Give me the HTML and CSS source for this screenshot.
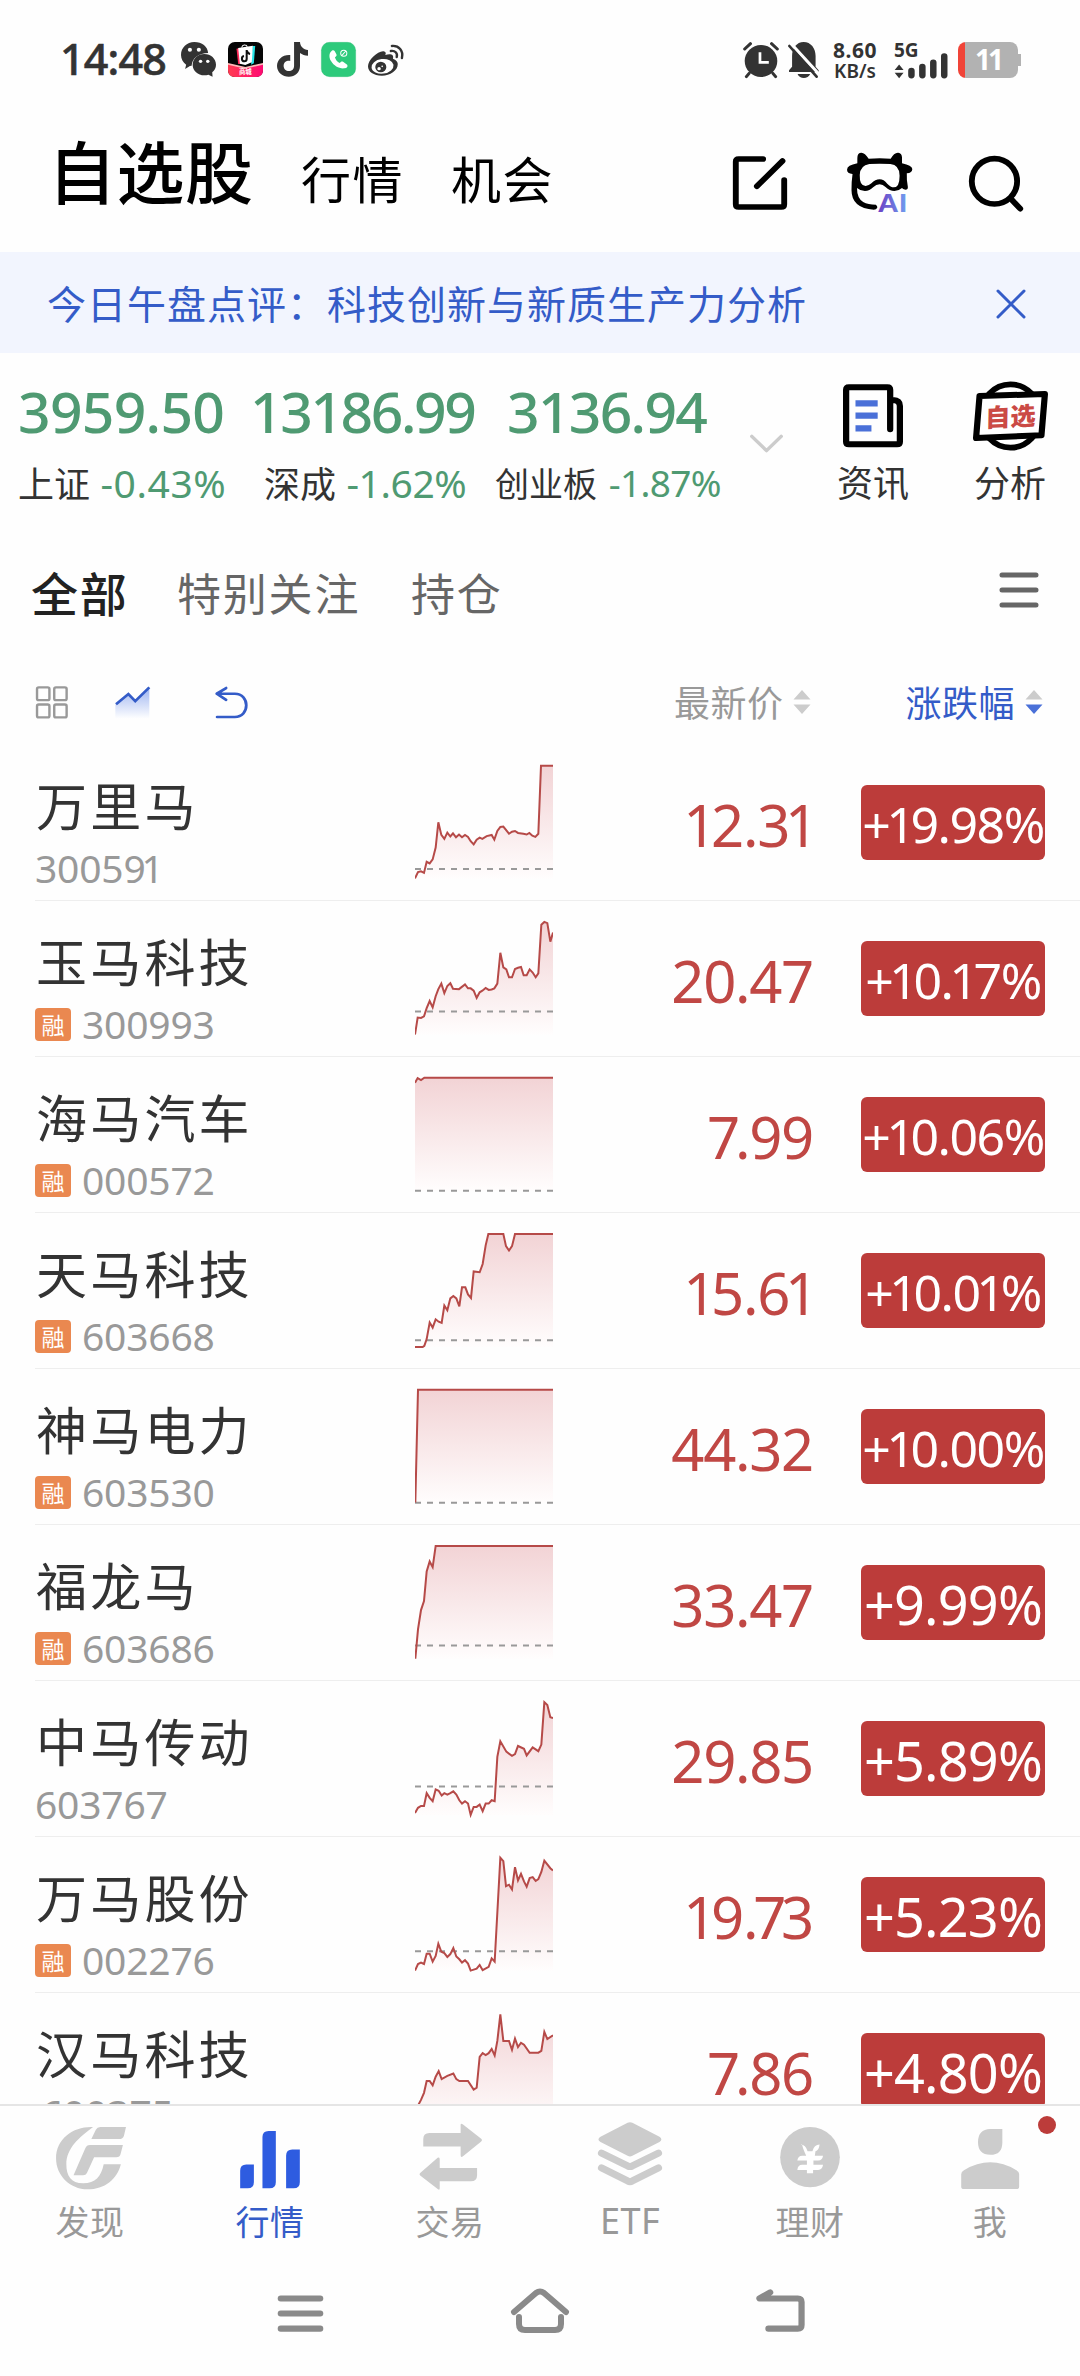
FILE: index.html
```html
<!DOCTYPE html>
<html lang="zh-CN">
<head>
<meta charset="utf-8">
<title>自选股</title>
<link rel="stylesheet" href="styles.css">
</head>
<body>
<svg class="defs" width="0" height="0">
  <defs>
    <linearGradient id="area" x1="0" y1="0" x2="0" y2="1"><stop offset="0" stop-color="#f2d3d5"/><stop offset="1" stop-color="#fffdfd"/></linearGradient>
    <linearGradient id="blue" x1="0" y1="0" x2="0" y2="1"><stop offset="0" stop-color="#9db4f0"/><stop offset="1" stop-color="#ffffff"/></linearGradient>
    <linearGradient id="ai" x1="0" y1="0" x2="1" y2="0"><stop offset="0" stop-color="#6c3fc4"/><stop offset="1" stop-color="#6f9ff0"/></linearGradient>
    <linearGradient id="shop" x1="0" y1="0" x2="1" y2="0"><stop offset="0" stop-color="#ff3b52"/><stop offset="1" stop-color="#ff0a72"/></linearGradient>
  </defs>
</svg>
<div class="screen">
  <div class="status">
    <span class="time">14:48</span>
    <svg class="i-wechat" viewBox="526 126 102 105" preserveAspectRatio="none">
      <path d="M565 126c22 0 39 14 40 33-26 0-47 15-48 38l-5 1-14 9 3-13c-9-7-15-17-15-29 0-22 17-39 39-39z" fill="#333"/>
      <path d="M594 162c19 0 34 14 34 32 0 9-4 17-11 23l1 13-12-6c-4 1-8 2-12 2-19 0-34-14-34-32s15-32 34-32z" fill="#333"/>
      <g fill="#fff"><circle cx="552" cy="149" r="6"/><circle cx="578" cy="149" r="6"/><circle cx="583" cy="184" r="5"/><circle cx="604" cy="184" r="5"/></g>
    </svg>
    <svg class="i-shop" viewBox="661 126 103 105" preserveAspectRatio="none">
      <rect x="661" y="126" width="103" height="105" rx="20" fill="#050505"/>
      <path d="M661 191l51 12 52-12v20q0 20-20 20h-63q-20 0-20-20z" fill="url(#shop)"/>
      <path d="M661 189l51 12 52-12v5l-52 12-51-12z" fill="#ffb8b8"/>
      <path d="M686 146l5 46h10l-4-48z" fill="#ff2a5a"/><path d="M733 138h8l-4 52-8 4z" fill="#25e5e8"/>
      <path d="M691 144l43-7-3 50-19 8-16-4z" fill="#fff"/>
      <path d="M701 143q3-10 10-8 7 1 6 7" fill="none" stroke="#fff" stroke-width="3"/>
      <path d="M716 150v26a7 8 0 1 1-8-8M716 152q3 9 10 10" fill="none" stroke="#111" stroke-width="6"/>
      <text x="712" y="223" class="shop-text" text-anchor="middle">商城</text>
    </svg>
    <svg class="i-tiktok" viewBox="804 126 89 105" preserveAspectRatio="none">
      <path d="M853 126h17c1 14 10 23 23 24v17c-9 0-17-3-23-8v39c0 19-14 32-32 32s-34-13-34-32c0-20 17-35 38-33v18c-10-2-19 4-19 15 0 9 7 15 15 15 9 0 15-6 15-16z" fill="#333"/>
    </svg>
    <svg class="i-phone" viewBox="931 126 103 105" preserveAspectRatio="none">
      <rect x="932" y="127" width="101" height="103" rx="24" fill="#2dca7b" stroke="#23b86c"/>
      <path d="M963 152c-9 7-9 20-2 32 8 14 24 23 39 21 8-1 11-6 8-11l-12-9c-4-2-7 0-10 4-7-3-12-9-14-17 5-3 6-6 4-10l-5-9c-2-3-5-3-8-1z" fill="#fff"/>
      <circle cx="998" cy="160" r="9" fill="none" stroke="#fff" stroke-width="3"/><path d="M992 167l12-14" stroke="#fff" stroke-width="3"/>
    </svg>
    <svg class="i-weibo" viewBox="1068 132 104 99" preserveAspectRatio="none">
      <path d="M1068 199c0-19 29-47 45-45 6 1 8 5 5 11 14-5 26-2 22 11 9 3 14 9 14 16 0 20-22 35-46 35s-40-11-40-28z" fill="#333"/>
      <ellipse cx="1110" cy="199" rx="32" ry="22" fill="#fff" transform="rotate(-8 1110 199)"/>
      <circle cx="1105" cy="201" r="16" fill="#333"/><circle cx="1100" cy="206" r="5" fill="#fff"/><circle cx="1109" cy="199" r="2.500" fill="#fff"/>
      <path d="M1134 153c12-2 20 6 17 18M1137 138c20-2 34 14 29 36" fill="none" stroke="#333" stroke-width="7" stroke-linecap="round"/>
    </svg>
    <span class="push"></span>
    <svg class="i-alarm" viewBox="582 126 106 108" preserveAspectRatio="none">
      <circle cx="635" cy="183" r="48" fill="#333"/>
      <path d="M587 147l17-16M683 147l-17-16M600 220l-8 10M670 220l8 10" stroke="#333" stroke-width="9" stroke-linecap="round"/>
      <path d="M632 157v30h26" fill="none" stroke="#fff" stroke-width="8"/>
    </svg>
    <svg class="i-bell" viewBox="714 126 91 108" preserveAspectRatio="none">
      <path d="M717 216v-5l9-11v-32c0-23 13-42 34-42s35 19 35 42v32l9 11v5zM742 222h37c-6 16-31 16-37 0z" fill="#333"/>
      <path d="M722 130l82 91" stroke="#fff" stroke-width="9"/><path d="M718 138l80 92" stroke="#333" stroke-width="8" stroke-linecap="round"/>
    </svg>
    <span class="speed"><b>8.60</b><b>KB/s</b></span>
    <span class="signal"><b>5G</b>
      <svg viewBox="1024 158 158 76" preserveAspectRatio="none"><path d="M1039 193l13 17h-26zM1039 235l13-17h-26z" fill="#333"/><path d="M1075 212v14M1107 200v26M1139 187v39M1171 168v58" stroke="#333" stroke-width="19" stroke-linecap="round"/></svg>
    </span>
    <span class="battery"><span class="level">11</span></span>
  </div>

  <div class="header">
    <span class="h-main">自选股</span><span class="h-tab h-tab1">行情</span><span class="h-tab">机会</span>
    <span class="push"></span>
    <svg class="i-edit" viewBox="555 450 162 195" preserveAspectRatio="none"><g fill="none" stroke="#000" stroke-width="17" stroke-linecap="round" stroke-linejoin="round"><path d="M645 477h-71q-8 0-8 8v128q0 8 8 8h124q8 0 8-8v-73"/><path d="M627 559l74-76"/></g></svg>
    <svg class="i-owl" viewBox="887 450 195 195" preserveAspectRatio="none">
      <path d="M920 474q0-16 12-16 10 0 21 18 32-3 64 0 10-19 22-18 11 1 11 15v17q29 7 30 17 0 12-16 13-1 20 3 40 1 9-7 9-8-1-10-5-10 9-22 9-14 0-26-12-8-8-17-8-10 0-19 9-10 11-24 11-13 0-23-9 0 31 18 42 14 8 37 8 5 4 4 9-3 6-10 6-65-4-65-59 0-27 3-48-16-2-16-13 0-13 30-19z" fill="#000"/>
      <path d="M955 492q30-2 61 0 27 3 27 35 0 35-17 35-9 0-19-11-10-13-22-13-13 0-24 12-9 8-17 8-18 0-17-33 1-29 28-33z" fill="#fff"/>
      <text x="979" y="637" class="ai-text" textLength="86" lengthAdjust="spacingAndGlyphs" fill="url(#ai)">AI</text>
    </svg>
    <svg class="i-search" viewBox="1240 450 163 195" preserveAspectRatio="none"><g fill="none" stroke="#000" stroke-width="17" stroke-linecap="round"><ellipse cx="1317" cy="544" rx="66" ry="68"/><path d="M1368 600l24 26"/></g></svg>
  </div>

  <div class="banner">
    <span>今日午盘点评：科技创新与新质生产力分析</span>
    <svg viewBox="0 0 30 30"><path d="M2 2l26 26M28 2L2 28" stroke="#345cc8" stroke-width="3" stroke-linecap="round"/></svg>
  </div>

  <div class="indices">
    <div class="index ix1"><div class="ix-num">3959.50</div><div class="ix-sub">上证 <em>-0.43%</em></div></div>
    <div class="index ix2"><div class="ix-num">13186.99</div><div class="ix-sub">深成 <em>-1.62%</em></div></div>
    <div class="index ix3"><div class="ix-num">3136.94</div><div class="ix-sub">创业板 <em>-1.87%</em></div></div>
    <svg class="i-chev" viewBox="608 550 100 62" preserveAspectRatio="none"><path d="M616 560l42 42 42-42" fill="none" stroke="#ccc" stroke-width="10" stroke-linecap="round" stroke-linejoin="round"/></svg>
    <div class="tool t1">
      <svg class="i-news" viewBox="884 395 173 210" preserveAspectRatio="none"><path d="M1020 540V422q0-8-8-8H901q-8 0-8 8v155q0 8 8 8h139q8 0 8-8V470q0-17-20-18" fill="none" stroke="#000" stroke-width="18" stroke-linecap="round" stroke-linejoin="round"/><path d="M920 462h64M920 499h64M920 537h46" stroke="#4a70d8" stroke-width="19"/></svg>
      <span>资讯</span>
    </div>
    <div class="tool t2">
      <svg class="i-stamp" viewBox="1257 395 218 210" preserveAspectRatio="none"><ellipse cx="1366" cy="500" rx="87" ry="95" fill="#fff" stroke="#000" stroke-width="17"/><path d="M1276 440l190-6-10 124-190 8z" fill="#fff" stroke="#000" stroke-width="18" stroke-linejoin="round"/><text class="stamp-text" transform="translate(1292 533) rotate(-3) skewX(-4)" textLength="147" lengthAdjust="spacingAndGlyphs">自选</text></svg>
      <span>分析</span>
    </div>
  </div>

  <div class="groups">
    <span class="g-on">全部</span><span class="g2">特别关注</span><span>持仓</span>
    <span class="push"></span>
    <svg viewBox="0 0 40 36"><path d="M3 3h34M3 18h34M3 33h34" stroke="#666" stroke-width="5" stroke-linecap="round"/></svg>
  </div>

  <div class="cols">
    <svg class="i-grid" viewBox="104 467 93 98" preserveAspectRatio="none"><g fill="none" stroke="#999" stroke-width="7"><rect x="107" y="471" width="36" height="38" rx="5"/><rect x="157" y="471" width="36" height="38" rx="5"/><rect x="107" y="522" width="36" height="38" rx="5"/><rect x="157" y="522" width="36" height="38" rx="5"/></g></svg>
    <svg class="i-trend" viewBox="333 467 102 98" preserveAspectRatio="none"><path d="M334 522l38-30 20 20 41-41v94h-99z" fill="url(#blue)"/><path d="M336 521l36-30 20 21 41-41" fill="none" stroke="#345cc8" stroke-width="8"/></svg>
    <svg class="i-undo" viewBox="624 467 95 98" preserveAspectRatio="none"><path d="M656 473l-27 17 27 18M631 490h50c44 0 44 69 0 69h-51" fill="none" stroke="#345cc8" stroke-width="8" stroke-linecap="round" stroke-linejoin="round"/></svg>
    <span class="push"></span>
    <span class="c-label">最新价</span>
    <svg class="i-sort s1" viewBox="0 0 18 24"><path d="M9 0l8.500 9.500H.5zM9 24l8.500-9.500H.5z" fill="#ccc"/></svg>
    <span class="c-label on">涨跌幅</span>
    <svg class="i-sort" viewBox="0 0 18 24"><path d="M9 0l8.500 9.500H.5z" fill="#ccc"/><path d="M9 24l8.500-9.500H.5z" fill="#4a70d8"/></svg>
  </div>

  <div class="list">
    <div class="row">
      <div class="stock"><div class="name">万里马</div><div class="code">30059<i>1</i></div></div>
      <svg class="spark" viewBox="75 12.600 414 392" preserveAspectRatio="none">
        <path class="area" d="M75 350L84 334 93 332 102 336 110 308 119 312 128 302 137 272 145 208 154 240 163 250 172 234 181 244 189 236 198 246 207 239 216 246 225 240 234 245 242 256 251 264 260 252 269 247 277 250 290 243 305 240 313 252 322 230 331 220 340 219 357 237 366 232 375 230 384 235 400 237 410 239 418 235 427 242 436 245 445 237 453 65 489 65V350z"/>
        <path class="base" d="M75 326H489"/>
        <path class="line" d="M75 350L84 334 93 332 102 336 110 308 119 312 128 302 137 272 145 208 154 240 163 250 172 234 181 244 189 236 198 246 207 239 216 246 225 240 234 245 242 256 251 264 260 252 269 247 277 250 290 243 305 240 313 252 322 230 331 220 340 219 357 237 366 232 375 230 384 235 400 237 410 239 418 235 427 242 436 245 445 237 453 65 489 65"/>
      </svg>
      <div class="price"><i>1</i>2.3<i>1</i></div><div class="pill">+<i>1</i>9.98%</div>
    </div>
    <div class="row">
      <div class="stock"><div class="name">玉马科技</div><div class="code"><span class="tag">融</span>300993</div></div>
      <svg class="spark" viewBox="75 407.100 414 392" preserveAspectRatio="none">
        <path class="area" d="M75 745L83 702 93 703 102 699 110 678 119 660 128 676 137 648 145 630 154 616 163 640 172 622 181 615 189 629 207 630 225 618 234 628 242 628 251 634 260 652 269 638 277 634 287 627 296 632 305 631 313 628 322 616 331 538 340 575 349 580 357 600 366 600 375 579 384 576 393 574 401 595 410 595 419 580 428 588 437 600 445 590 454 467 463 460 472 463 481 510 489 487V745z"/>
        <path class="base" d="M75 686.500H489"/>
        <path class="line" d="M75 745L83 702 93 703 102 699 110 678 119 660 128 676 137 648 145 630 154 616 163 640 172 622 181 615 189 629 207 630 225 618 234 628 242 628 251 634 260 652 269 638 277 634 287 627 296 632 305 631 313 628 322 616 331 538 340 575 349 580 357 600 366 600 375 579 384 576 393 574 401 595 410 595 419 580 428 588 437 600 445 590 454 467 463 460 472 463 481 510 489 487"/>
      </svg>
      <div class="price">20.47</div><div class="pill">+<i>1</i>0.<i>1</i>7%</div>
    </div>
    <div class="row">
      <div class="stock"><div class="name">海马汽车</div><div class="code"><span class="tag">融</span>000572</div></div>
      <svg class="spark" viewBox="75 801.600 414 392" preserveAspectRatio="none">
        <path class="area" d="M75 867L83 855 93 860 103 854H489V1140H75z"/>
        <path class="base" d="M75 1140H489"/>
        <path class="line" d="M75 867L83 855 93 860 103 854H489"/>
      </svg>
      <div class="price"><i>7</i>.99</div><div class="pill">+<i>1</i>0.06%</div>
    </div>
    <div class="row">
      <div class="stock"><div class="name">天马科技</div><div class="code"><span class="tag">融</span>603668</div></div>
      <svg class="spark" viewBox="75 1196.100 414 392" preserveAspectRatio="none">
        <path class="area" d="M75 1535H98L103 1532 110 1515 119 1473 128 1486 137 1465 146 1471 155 1474 163 1430 172 1442 181 1412 190 1406 199 1412 208 1432 216 1384 226 1384 234 1402 243 1411 251 1344 269 1346 278 1325 287 1278 295 1249H340L348 1280 357 1291 366 1280 375 1249H489V1535z"/>
        <path class="base" d="M75 1518H489"/>
        <path class="line" d="M75 1535H98L103 1532 110 1515 119 1473 128 1486 137 1465 146 1471 155 1474 163 1430 172 1442 181 1412 190 1406 199 1412 208 1432 216 1384 226 1384 234 1402 243 1411 251 1344 269 1346 278 1325 287 1278 295 1249H340L348 1280 357 1291 366 1280 375 1249H489"/>
      </svg>
      <div class="price"><i>1</i>5.6<i>1</i></div><div class="pill">+<i>1</i>0.0<i>1</i>%</div>
    </div>
    <div class="row">
      <div class="stock"><div class="name">神马电力</div><div class="code"><span class="tag">融</span>603530</div></div>
      <svg class="spark" viewBox="75 19.100 414 328.400" preserveAspectRatio="none">
        <path class="area" d="M76 302L84 63H489V302z"/>
        <path class="base" d="M75 302.500H489"/>
        <path class="line" d="M76 302L84 63H489"/>
      </svg>
      <div class="price">44.32</div><div class="pill">+<i>1</i>0.00%</div>
    </div>
    <div class="row">
      <div class="stock"><div class="name">福龙马</div><div class="code"><span class="tag">融</span>603686</div></div>
      <svg class="spark" viewBox="75 349.700 414 328.400" preserveAspectRatio="none">
        <path class="area" d="M76 633L84 571 93 530 102 511 110 448 119 427 128 439 137 394H489V633z"/>
        <path class="base" d="M75 605H489"/>
        <path class="line" d="M76 633L84 571 93 530 102 511 110 448 119 427 128 439 137 394H489"/>
      </svg>
      <div class="price">33.47</div><div class="pill big">+9.99%</div>
    </div>
    <div class="row">
      <div class="stock"><div class="name">中马传动</div><div class="code">603767</div></div>
      <svg class="spark" viewBox="75 680.300 414 328.400" preserveAspectRatio="none">
        <path class="area" d="M75 960L84 949 93 945 102 945 110 918 119 928 128 935 137 910 146 913 155 923 163 918 172 921 181 918 190 914 199 921 208 933 216 940 225 935 234 940 242 964 251 947 260 947 269 942 278 956 287 940 296 940 305 933 314 935 322 841 331 808 349 830 366 839 375 835 384 818 402 824 410 838 428 821 445 829 454 815 463 725 472 731 481 757 489 759V964H75z"/>
        <path class="base" d="M75 904H489"/>
        <path class="line" d="M75 960L84 949 93 945 102 945 110 918 119 928 128 935 137 910 146 913 155 923 163 918 172 921 181 918 190 914 199 921 208 933 216 940 225 935 234 940 242 964 251 947 260 947 269 942 278 956 287 940 296 940 305 933 314 935 322 841 331 808 349 830 366 839 375 835 384 818 402 824 410 838 428 821 445 829 454 815 463 725 472 731 481 757 489 759"/>
      </svg>
      <div class="price">29.85</div><div class="pill big">+5.89%</div>
    </div>
    <div class="row">
      <div class="stock"><div class="name">万马股份</div><div class="code"><span class="tag">融</span>002276</div></div>
      <svg class="spark" viewBox="75 1010.900 414 328.400" preserveAspectRatio="none">
        <path class="area" d="M75 1294L84 1280 93 1277 102 1280 110 1258 119 1258 128 1275 137 1263 145 1237 154 1254 163 1257 172 1265 181 1259 190 1246 199 1264 208 1270 216 1277 225 1272 234 1279 242 1294 260 1290 269 1282 278 1293 296 1286 305 1268 314 1275 331 1055 340 1062 348 1115 357 1112 366 1122 375 1075 384 1103 393 1089 402 1105 410 1116 419 1098 428 1096 437 1104 445 1100 454 1085 463 1061 481 1077 489 1082V1294z"/>
        <path class="base" d="M75 1253H489"/>
        <path class="line" d="M75 1294L84 1280 93 1277 102 1280 110 1258 119 1258 128 1275 137 1263 145 1237 154 1254 163 1257 172 1265 181 1259 190 1246 199 1264 208 1270 216 1277 225 1272 234 1279 242 1294 260 1290 269 1282 278 1293 296 1286 305 1268 314 1275 331 1055 340 1062 348 1115 357 1112 366 1122 375 1075 384 1103 393 1089 402 1105 410 1116 419 1098 428 1096 437 1104 445 1100 454 1085 463 1061 481 1077 489 1082"/>
      </svg>
      <div class="price"><i>1</i>9.<i>7</i>3</div><div class="pill big">+5.23%</div>
    </div>
    <div class="row">
      <div class="stock"><div class="name">汉马科技</div><div class="code last">600375</div></div>
      <svg class="spark" viewBox="75 1341.500 414 328.400" preserveAspectRatio="none">
        <path class="area" d="M84 1580L93 1568 102 1553 110 1528 119 1528 128 1537 137 1519 146 1507 155 1524 172 1517 190 1512 199 1524 208 1528 234 1528 251 1546 260 1542 269 1477 278 1469 287 1473 296 1469 305 1460 314 1474 322 1443 331 1387 340 1443 357 1443 366 1462 375 1438 384 1456 393 1447 402 1451 419 1468 445 1468 454 1464 463 1424 472 1439 489 1431V1625H84z"/>
        <path class="line" d="M84 1580L93 1568 102 1553 110 1528 119 1528 128 1537 137 1519 146 1507 155 1524 172 1517 190 1512 199 1524 208 1528 234 1528 251 1546 260 1542 269 1477 278 1469 287 1473 296 1469 305 1460 314 1474 322 1443 331 1387 340 1443 357 1443 366 1462 375 1438 384 1456 393 1447 402 1451 419 1468 445 1468 454 1464 463 1424 472 1439 489 1431"/>
      </svg>
      <div class="price"><i>7</i>.86</div><div class="pill big">+4.80%</div>
    </div>
  </div>

  <div class="tabbar">
    <div class="tab"><svg viewBox="156 120 210 215" preserveAspectRatio="none"><g fill="#ccc"><path d="M270 141c-55-3-108 33-108 94 0 50 40 92 92 92 50 0 86-30 97-75h-50c-8 37-24 57-60 57-36 0-49-24-49-57 0-47 37-80 78-111z"/><path d="M366 141l-6 26q-3 10-14 10h-81l13-28q4-8 13-8zM357 195l-7 27q-2 9-12 9h-65l-21 47q-3 7-11 7h-28l34-80q4-10 14-10z"/></g></svg><span>发现</span></div>
    <div class="tab on"><svg viewBox="679 120 210 215" preserveAspectRatio="none"><path d="M697 324v-53q0-18 18-18h22v53q0 18-18 18zM762 324V171q0-18 18-18h21v153q0 18-18 18zM831 324v-98q0-18 18-18h22v98q0 18-18 18z" fill="#2e5ce0"/></svg><span>行情</span></div>
    <div class="tab"><svg viewBox="1201 120 210 215" preserveAspectRatio="none"><path d="M1228 199v-22q0-18 18-18h91v-24q0-6 6-2l54 43q5 4 0 8l-54 45q-6 4-6-4v-26zM1385 263v22q0 18-18 18h-91v21q0 7-5 3l-52-41q-4-4 0-8l51-45q6-4 6 4v26z" fill="#ccc"/></svg><span>交易</span></div>
    <div class="tab etf"><svg viewBox="156 120 210 215" preserveAspectRatio="none"><path d="M254 128q7-3 14 0l79 42q11 8 0 16l-79 41q-7 4-14 0l-79-41q-12-8 0-16z" fill="#ccc"/><path d="M178 219l76 38q7 4 14 0l76-38M178 263l76 39q7 4 14 0l76-39" fill="none" stroke="#ccc" stroke-width="21" stroke-linecap="round"/></svg><span>ETF</span></div>
    <div class="tab"><svg viewBox="679 120 210 215" preserveAspectRatio="none"><ellipse cx="784" cy="231" rx="87" ry="90" fill="#ccc"/><path d="M757 193q14 0 20 20h14q5-20 21-20-2 18-12 20l-2 14h24q-2 14-14 14h-14v13h28q-2 15-14 15h-15v10h-18v-10h-28q2-15 14-15h14v-13h-28q2-14 14-14h12q-10-22-12-34z" fill="#fff"/></svg><span>理财</span></div>
    <div class="tab"><svg viewBox="1201 120 210 215" preserveAspectRatio="none"><path d="M1342 147v40q0 37-35 37-36 0-36-38t36-39zM1222 282q0-7 8-12 77-47 153 0 8 5 8 11v38q0 7-8 7h-153q-8 0-8-7z" fill="#ccc"/></svg><span>我</span><b class="dot"></b></div>
  </div>
  <div class="sysnav">
    <svg viewBox="803 620 136 140" preserveAspectRatio="none"><path d="M814 654h114M814 699h114M814 744h114" stroke="#8a8a8a" stroke-width="18" stroke-linecap="round"/></svg>
    <svg class="home" viewBox="0 0 60 47"><path d="M4 26L26 7q4-3 8 0l22 19M9 31v7q0 6 6 6h30q6 0 6-6v-7" fill="none" stroke="#8a8a8a" stroke-width="6" stroke-linecap="round" stroke-linejoin="round"/></svg>
    <svg class="back" viewBox="626 620 142 140" preserveAspectRatio="none"><path d="M667 636l-31 18h111q11 0 11 11v68q0 11-11 11h-85" fill="none" stroke="#8a8a8a" stroke-width="18" stroke-linecap="round" stroke-linejoin="round"/></svg>
  </div>
</div>
</body>
</html>
```
FILE: styles.css
```css
* { box-sizing: border-box; }
body { margin: 0; background: #fefefe; font-family: "Noto Sans", "Noto Sans CJK SC", sans-serif; color: #333; }
svg { display: block; flex: none; overflow: visible; }
em, i { font-style: normal; }
span { white-space: nowrap; }
.defs { position: absolute; }
.screen { width: 1080px; height: 2376px; overflow: hidden; display: flex; flex-direction: column; }
.screen > div { flex: none; }
.push { flex: 1; }

/* system status bar */
.status { height: 120px; padding: 42px 59px 0 60px; display: flex; align-items: flex-start; }
.time { width: 121px; font-size: 43px; line-height: 34px; font-weight: 500; letter-spacing: -.8px; -webkit-text-stroke: .6px #333; }
.i-wechat { width: 35px; height: 35px; margin-right: 12px; }
.i-shop { width: 35px; height: 35px; margin-right: 14px; }
.shop-text { font: 700 19px "Noto Sans CJK SC", sans-serif; fill: #fff; }
.i-tiktok { width: 31px; height: 35px; margin-right: 13px; }
.i-phone { width: 35px; height: 35px; margin-right: 12px; }
.i-weibo { width: 36px; height: 33px; margin-top: 2px; }
.i-alarm { width: 36px; height: 36px; margin-right: 9px; }
.i-bell { width: 31px; height: 36px; margin-right: 12px; }
.speed { width: 48px; margin-right: 15px; text-align: center; font-size: 21px; line-height: 17px; letter-spacing: .5px; }
.speed b { display: block; font-weight: 700; }
.speed b:last-child { font-size: 19px; line-height: 24px; letter-spacing: 0; font-weight: 600; }
.signal { width: 54px; margin-right: 10px; font-size: 19px; line-height: 16px; height: 36px; }
.signal b { display: block; height: 11px; font-weight: 700; }
.signal svg { width: 54px; height: 25px; }
.battery { width: 63px; height: 36px; padding-right: 3px; background: linear-gradient(#b2b2b2, #b2b2b2) right center / 4px 12px no-repeat; }
.level { display: block; height: 36px; border-radius: 8px; background: linear-gradient(90deg, #f04438 7px, #b2b2b2 7px); color: #fff; font-weight: 700; font-size: 28px; line-height: 35px; text-align: center; letter-spacing: -3px; }

/* app header */
.header { height: 132px; padding: 0 56px 0 48px; display: flex; align-items: flex-start; color: #000; font-family: "Noto Sans CJK SC", sans-serif; }
.h-main { font-size: 68px; line-height: 99px; font-weight: 500; width: 253px; letter-spacing: .5px; }
.h-tab { font-size: 50px; line-height: 115px; letter-spacing: 1.500px; }
.h-tab1 { width: 150px; }
.header svg { height: 65px; margin-top: 30px; }
.i-edit { width: 56px; margin-right: 58px; }
.i-owl { width: 67px; margin-right: 55px; }
.i-search { width: 56px; }
.ai-text { font: 700 78px "Liberation Sans", sans-serif; }

.banner { height: 101px; padding: 0 54px 0 47px; background: #f2f5fe; display: flex; align-items: center; justify-content: space-between; color: #345cc8; font: 39px/101px "Noto Sans CJK SC", sans-serif; letter-spacing: 1px; }
.banner svg { width: 30px; height: 30px; margin-top: 3px; }

/* market indices */
.indices { height: 167px; display: flex; padding-left: 18px; }
.index { display: flex; flex-direction: column; white-space: nowrap; }
.ix1 { width: 232px; }
.ix2 { width: 245px; }
.ix3 { width: 254px; }
.ix-num { color: #4f9a72; font-size: 57px; line-height: 60px; margin-top: 28px; font-weight: 500; letter-spacing: -.7px; }
.ix2 .ix-num { letter-spacing: -2.400px; }
.ix3 .ix-num { padding-left: 12px; letter-spacing: -1.700px; }
.ix-sub { font-size: 36px; line-height: 50px; margin-top: 17px; }
.ix-sub em { color: #4f9a72; font-size: 39px; margin-left: 1px; letter-spacing: .6px; }
.ix2 .ix-sub { padding-left: 14px; }
.ix2 .ix-sub em { letter-spacing: -.4px; }
.ix3 .ix-sub { font-size: 34px; }
.ix3 .ix-sub em { font-size: 37px; margin-left: 3px; letter-spacing: -.7px; }
.i-chev { width: 35px; height: 21px; margin: 80px 53px 0 0; }
.tool { display: flex; flex-direction: column; align-items: center; font-size: 36px; }
.tool span { line-height: 50px; margin-top: 8px; }
.t1 { width: 72px; margin-right: 63px; }
.t2 { width: 76px; }
.tool svg { height: 70px; margin-top: 28px; }
.i-news { width: 60px; }
.i-stamp { width: 75px; }
.stamp-text { font: 900 74px "Noto Sans CJK SC", sans-serif; fill: #cb4a45; }

/* watchlist groups */
.groups { height: 140px; padding: 0 41px 0 31px; display: flex; align-items: flex-start; color: #666; font: 44px/144px "Noto Sans CJK SC", sans-serif; letter-spacing: 1.800px; }
.g-on { width: 146px; color: #222; font-size: 47px; font-weight: 500; }
.g2 { width: 234px; }
.groups svg { width: 40px; height: 36px; margin-top: 52px; }

.cols { height: 85px; padding: 0 37px 0 36px; display: flex; font: 36px/83px "Noto Sans CJK SC", sans-serif; color: #999; }
.cols svg { margin-top: 26px; height: 33px; }
.i-grid { width: 32px; margin-right: 47px; }
.i-trend { width: 35px; margin-right: 65px; }
.i-undo { width: 33px; }
.cols .i-sort { width: 18px; height: 24px; margin-top: 30px; margin-left: 10px; }
.cols .s1 { margin-right: 94px; }
.c-label { letter-spacing: .5px; }
.c-label.on { color: #345cc8; }

/* stock rows */
.list { height: 1359px; padding-left: 35px; overflow: hidden; }
.row { height: 156px; border-bottom: 1px solid #eeeeee; display: flex; }
.stock { width: 380px; }
.name { font: 51px/60px "Noto Sans CJK SC", sans-serif; letter-spacing: 3.200px; margin: 29px 0 0 1px; }
.code { height: 44px; display: flex; align-items: center; font-size: 39px; line-height: 44px; color: #999; margin-top: 12px; letter-spacing: -.2px; }
.code.last { margin-top: 9px; padding-left: 6px; }
.code i { margin-left: -4px; }
.tag { width: 36px; height: 33px; margin-right: 11px; border-radius: 4px; background: #ea8850; color: #fff; font: 23px/33px "Noto Sans CJK SC", sans-serif; text-align: center; }
.spark { width: 138px; height: 155px; overflow: hidden; }
.area { fill: url(#area); }
.line { fill: none; stroke: #b64a48; stroke-width: 2px; vector-effect: non-scaling-stroke; }
.base { fill: none; stroke: #999; stroke-width: 2px; stroke-dasharray: 6 6; vector-effect: non-scaling-stroke; }
.price { width: 260px; text-align: right; color: #c04744; font-size: 58px; line-height: 159px; letter-spacing: -1.300px; }
.price i { margin: 0 -4px; }
.pill { width: 184px; height: 75px; margin: 40px 0 0 48px; border-radius: 6px; background: #bc3c3a; color: #fff; font-size: 50px; line-height: 78px; display: flex; justify-content: center; letter-spacing: -1.500px; }
.pill i { margin: 0 -3px; }
.pill.big { font-size: 54px; letter-spacing: -.8px; }

/* bottom navigation */
.tabbar { height: 144px; border-top: 2px solid #e5e5e5; display: grid; grid-template-columns: repeat(6, 180px); color: #999; font: 34px/50px "Noto Sans CJK SC", sans-serif; }
.tab { display: flex; flex-direction: column; align-items: center; position: relative; letter-spacing: .5px; }
.tab svg { width: 72px; height: 72px; margin-top: 14px; }
.tab span { margin-top: 4px; }
.tab.on { color: #345cc8; }
.etf { font-family: "Noto Sans", sans-serif; font-size: 36px; }
.dot { position: absolute; left: 138px; top: 10px; width: 18px; height: 18px; border-radius: 50%; background: #bc3c3a; }
.sysnav { height: 128px; padding: 39px 0 0 277px; display: flex; align-items: flex-start; }
.sysnav svg { width: 47px; height: 47px; }
.sysnav .home { width: 60px; margin: -1px 186px 0 186px; }
.sysnav .back { width: 49px; }
```
